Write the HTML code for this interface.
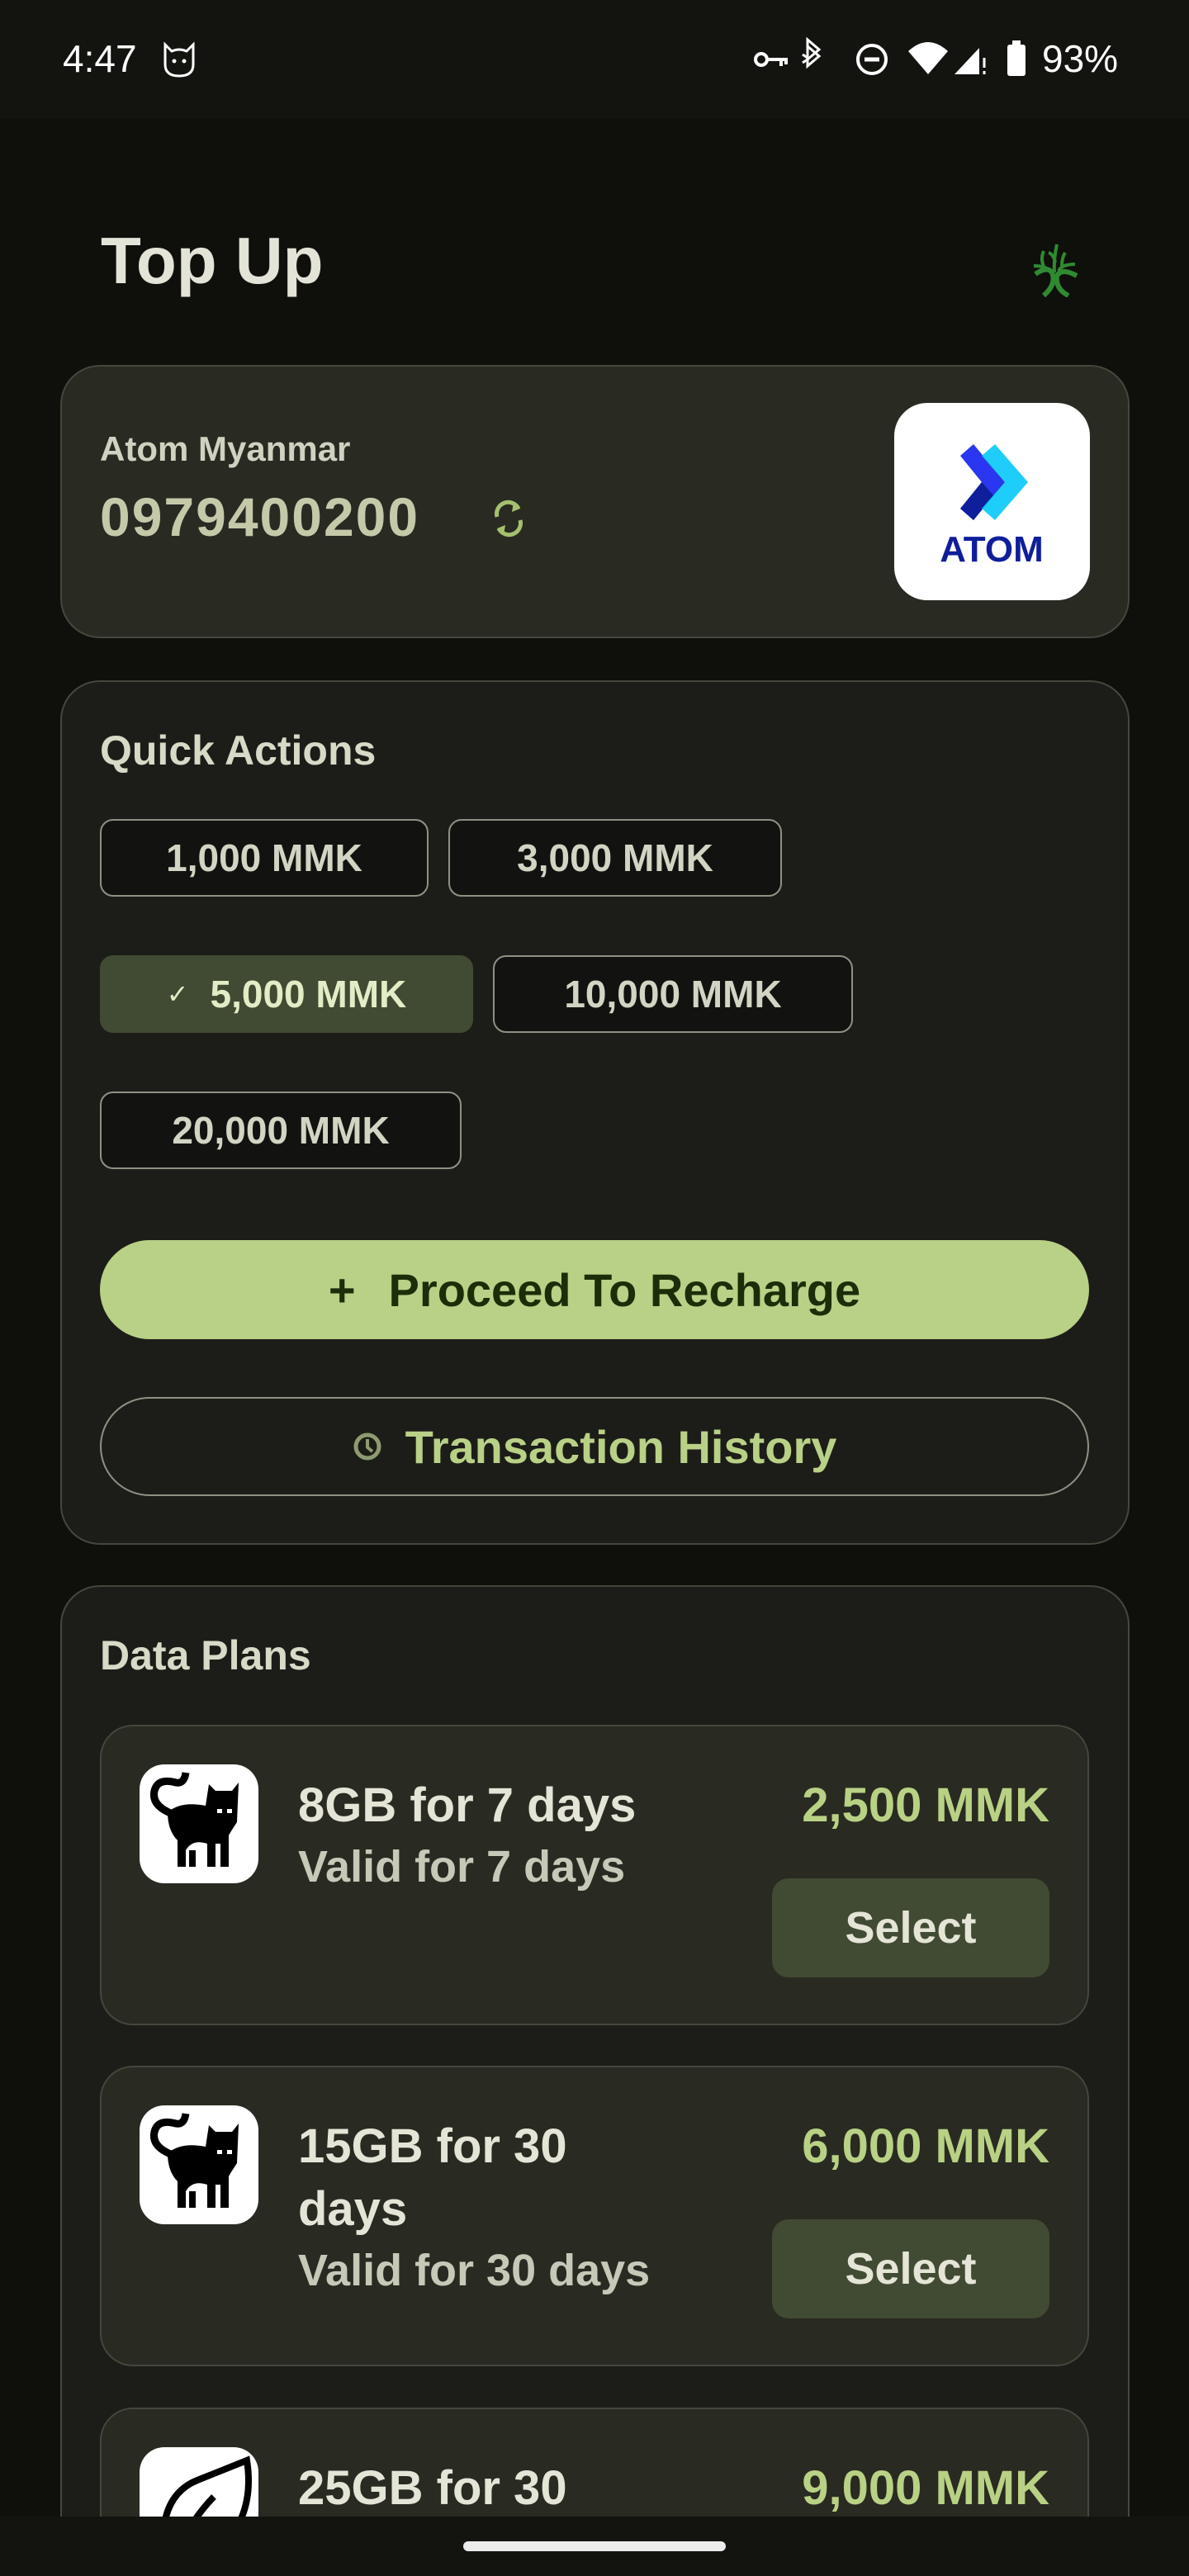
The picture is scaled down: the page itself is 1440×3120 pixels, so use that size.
<!DOCTYPE html>
<html style="width:1440px;height:3120px;overflow:hidden"><head><meta charset="utf-8">
<style>
*{margin:0;padding:0;box-sizing:border-box}
body{width:1440px;height:3120px;background:#0f100c;font-family:"Liberation Sans",sans-serif;position:relative;overflow:hidden;color:#e3e3d6}
.abs{position:absolute}
.status{left:0;top:0;width:1440px;height:144px;background:#131410}
.card{position:absolute;border:2px solid #45473d;border-radius:48px}
.chip{position:absolute;height:94px;border:2px solid #8e9183;border-radius:16px;background:#121310;color:#d2d4c4;font-size:46px;font-weight:bold;display:flex;align-items:center;justify-content:center}
.plan{position:absolute;left:121px;width:1198px;height:364px;background:#292a22;border:2px solid #45473d;border-radius:40px;overflow:hidden}
.ico{position:absolute;left:46px;top:46px;width:144px;height:144px;background:#fff;border-radius:30px;overflow:hidden}
.ptitle{position:absolute;left:238px;top:58px;font-size:58px;font-weight:bold;color:#e4e5d6;line-height:76px}
.psub{font-size:54px;color:#c7c9b8;font-weight:bold;line-height:72px}
.price{position:absolute;right:46px;top:58px;font-size:58px;font-weight:bold;color:#b9d184;line-height:76px}
.sel{position:absolute;right:46px;width:336px;height:120px;background:#414a32;border-radius:20px;color:#e4e5d6;font-size:54px;font-weight:bold;display:flex;align-items:center;justify-content:center}
</style></head><body>
<div class="abs status">
 <div class="abs" style="left:76px;top:44px;font-size:46px;color:#fff">4:47</div>
 <svg class="abs" style="left:192px;top:48px" width="50" height="50" viewBox="0 0 50 50"><path d="M8 6 L16 14 Q25 10 34 14 L42 6 L42 30 Q42 44 25 44 Q8 44 8 30Z" fill="none" stroke="#fff" stroke-width="3"/><circle cx="19" cy="26" r="2.5" fill="#fff"/><circle cx="31" cy="26" r="2.5" fill="#fff"/></svg>
 <svg class="abs" style="left:912px;top:40px" width="460" height="60" viewBox="0 0 460 60">
  <circle cx="10" cy="32" r="7" fill="none" stroke="#fff" stroke-width="4"/><path d="M17 32H42M34 32v8M40 32v6" stroke="#fff" stroke-width="4"/>
  <path d="M66 16l14 12-14 12V8l14 12-14 12" fill="none" stroke="#fff" stroke-width="3"/><path d="M60 26l6 4M60 36l6-4" stroke="#fff" stroke-width="3"/>
  <circle cx="144" cy="32" r="17" fill="none" stroke="#fff" stroke-width="4"/><path d="M135 32h18" stroke="#fff" stroke-width="5"/>
  <path d="M188 22 Q212 0 236 22 L212 50Z" fill="#fff"/>
  <path d="M244 50 L274 18 L274 50Z" fill="#fff"/><path d="M280 30v12M280 46v4" stroke="#fff" stroke-width="3"/>
  <rect x="308" y="14" width="22" height="38" rx="3" fill="#fff"/><rect x="314" y="9" width="10" height="6" fill="#fff"/>
 </svg>
 <div class="abs" style="left:1262px;top:44px;font-size:46px;color:#fff">93%</div>
</div>

<div class="abs" style="left:122px;top:270px;font-size:80px;font-weight:bold;color:#e4e3d8">Top Up</div>
<svg class="abs" style="left:1250px;top:294px" width="58" height="66" viewBox="0 0 58 66">
 <path d="M14 64 Q30 50 24 36 Q18 28 4 38" fill="none" stroke="#2f8a32" stroke-width="6"/>
 <path d="M44 64 Q28 56 30 40 Q36 30 54 40" fill="none" stroke="#2f8a32" stroke-width="6"/>
 <path d="M27 36 Q26 20 30 2 M22 34 Q16 28 2 28 M14 28 Q10 20 14 10 M32 34 Q36 26 52 26 M36 28 Q36 18 40 12 M20 12 Q26 14 28 24" fill="none" stroke="#2f8a32" stroke-width="4"/>
</svg>

<!-- card 1 -->
<div class="card" style="left:73px;top:442px;width:1295px;height:331px;background:#292a22"></div>
<div class="abs" style="left:121px;top:520px;font-size:42px;font-weight:bold;color:#d0d2c1">Atom Myanmar</div>
<div class="abs" style="left:121px;top:588px;font-size:66px;font-weight:bold;color:#c5c9aa;letter-spacing:2px">0979400200</div>
<svg class="abs" style="left:594px;top:604px" width="44" height="48" viewBox="0 0 44 48"><path d="M34 12 A14 14 0 0 0 8 22 M10 36 A14 14 0 0 0 36 26" fill="none" stroke="#a5c06e" stroke-width="5"/><path d="M28 4l8 8-10 4z M16 44l-8-8 10-4z" fill="#a5c06e"/></svg>
<div class="abs" style="left:1083px;top:488px;width:237px;height:239px;background:#fff;border-radius:40px">
 <svg class="abs" style="left:0;top:0" width="237" height="239" viewBox="0 0 237 239">
  <path d="M80 64 L96 50 L134 96 L96 142 L80 128 L106 96Z" fill="#2a36f0"/>
  <path d="M80 128 L106 96 L120 112 L96 142Z" fill="#0f1e9a"/>
  <path d="M106 64 L122 50 L162 96 L122 142 L106 128 L134 96Z" fill="#06c8f8" opacity="0.9"/>
  <text x="118" y="192" text-anchor="middle" font-family="Liberation Sans" font-weight="bold" font-size="44" fill="#0f1e9a">ATOM</text>
 </svg>
</div>

<!-- card 2 -->
<div class="card" style="left:73px;top:824px;width:1295px;height:1047px;background:#1c1d18"></div>
<div class="abs" style="left:121px;top:880px;font-size:50px;font-weight:bold;color:#d8dac8">Quick Actions</div>
<div class="chip" style="left:121px;top:992px;width:398px">1,000 MMK</div>
<div class="chip" style="left:543px;top:992px;width:404px">3,000 MMK</div>
<div class="chip" style="left:121px;top:1157px;width:452px;background:#414a32;border-color:#414a32;color:#e2ecc6"><span style="font-size:32px;font-weight:normal;margin-right:26px">✓</span>5,000 MMK</div>
<div class="chip" style="left:597px;top:1157px;width:436px">10,000 MMK</div>
<div class="chip" style="left:121px;top:1322px;width:438px">20,000 MMK</div>
<div class="abs" style="left:121px;top:1502px;width:1198px;height:120px;background:#b9d087;border-radius:60px;display:flex;align-items:center;justify-content:center;color:#1d2d0a;font-size:56px;font-weight:bold"><span style="margin-right:40px">+</span>Proceed To Recharge</div>
<div class="abs" style="left:121px;top:1692px;width:1198px;height:120px;border:2px solid #8e9183;border-radius:60px;display:flex;align-items:center;justify-content:center;color:#b9d087;font-size:56px;font-weight:bold"><svg width="36" height="36" viewBox="0 0 36 36" style="margin-right:28px"><circle cx="18" cy="18" r="14" fill="none" stroke="#8e9a70" stroke-width="5"/><path d="M18 9v10l6 5" fill="none" stroke="#8e9a70" stroke-width="4"/></svg>Transaction History</div>

<!-- card 3 -->
<div class="card" style="left:73px;top:1920px;width:1295px;height:1180px;background:#1c1d18"></div>
<div class="abs" style="left:121px;top:1976px;font-size:50px;font-weight:bold;color:#d8dac8">Data Plans</div>

<div class="plan" style="top:2089px">
 <div class="ico"><svg width="144" height="144" viewBox="0 0 144 144"><path d="M40 60 Q14 50 18 32 Q22 16 44 22 Q54 24 56 10" fill="none" stroke="#000" stroke-width="9"/><path d="M34 58 Q50 44 80 50 L84 24 L92 32 L112 32 L120 22 L118 70 Q110 82 108 86 L108 124 L98 124 L98 96 L92 96 L92 124 L82 124 L82 96 Q64 90 56 104 L56 124 L46 124 L46 92 Q34 80 34 58Z" fill="#000"/><rect x="60" y="104" width="8" height="20" fill="#000"/><rect x="94" y="54" width="6" height="5" fill="#fff"/><rect x="106" y="54" width="6" height="5" fill="#fff"/></svg></div>
 <div class="ptitle">8GB for 7 days<div class="psub">Valid for 7 days</div></div>
 <div class="price">2,500 MMK</div>
 <div class="sel" style="top:184px">Select</div>
</div>

<div class="plan" style="top:2502px">
 <div class="ico"><svg width="144" height="144" viewBox="0 0 144 144"><path d="M40 60 Q14 50 18 32 Q22 16 44 22 Q54 24 56 10" fill="none" stroke="#000" stroke-width="9"/><path d="M34 58 Q50 44 80 50 L84 24 L92 32 L112 32 L120 22 L118 70 Q110 82 108 86 L108 124 L98 124 L98 96 L92 96 L92 124 L82 124 L82 96 Q64 90 56 104 L56 124 L46 124 L46 92 Q34 80 34 58Z" fill="#000"/><rect x="60" y="104" width="8" height="20" fill="#000"/><rect x="94" y="54" width="6" height="5" fill="#fff"/><rect x="106" y="54" width="6" height="5" fill="#fff"/></svg></div>
 <div class="ptitle">15GB for 30<br>days<div class="psub">Valid for 30 days</div></div>
 <div class="price">6,000 MMK</div>
 <div class="sel" style="top:184px">Select</div>
</div>

<div class="plan" style="top:2916px;height:180px">
 <div class="ico"><svg width="144" height="144" viewBox="0 0 144 144"><path d="M30 140 Q20 60 70 40 Q100 28 130 16 Q140 80 100 120 Q70 144 30 140Z M40 140 Q60 90 90 60" fill="none" stroke="#000" stroke-width="8"/></svg></div>
 <div class="ptitle">25GB for 30</div>
 <div class="price">9,000 MMK</div>
</div>

<div class="abs" style="left:0;top:3048px;width:1440px;height:72px;background:#131410"></div>
<div class="abs" style="left:561px;top:3078px;width:318px;height:12px;background:#ececec;border-radius:6px"></div>
</body></html>
